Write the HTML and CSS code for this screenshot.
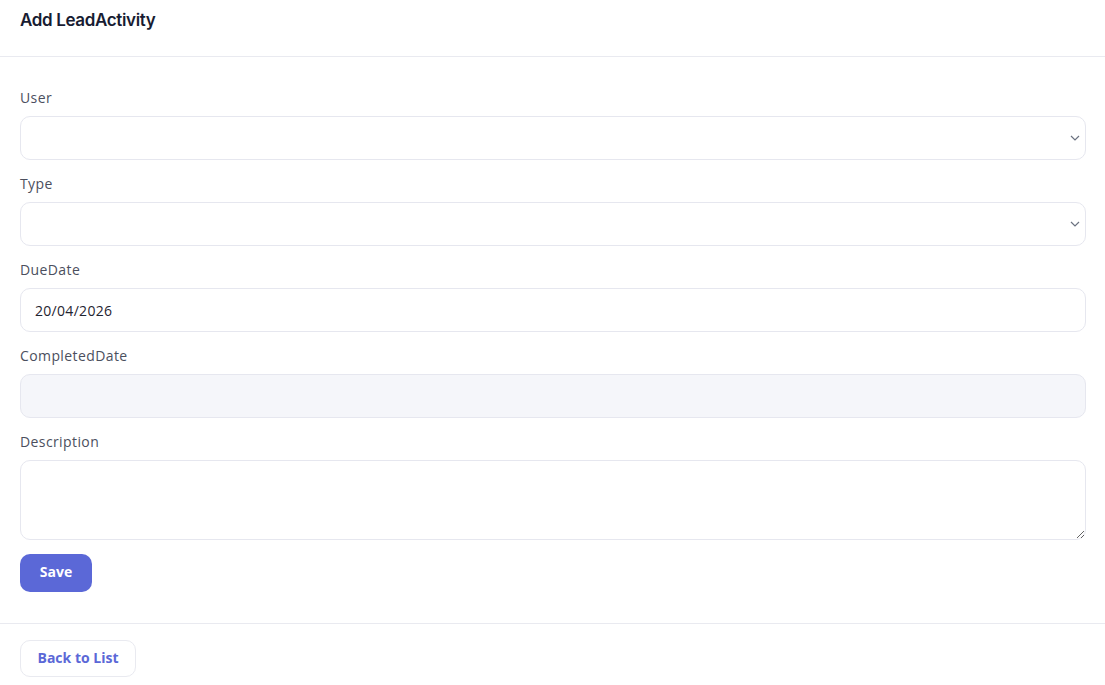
FILE: index.html
```html
<!DOCTYPE html>
<html lang="en">
<head>
<meta charset="utf-8">
<title>Add LeadActivity</title>
<link rel="stylesheet" href="styles.css">
</head>
<body>
<div class="card">
  <div class="card-header">
    <h1 class="title">Add LeadActivity</h1>
  </div>
  <form class="card-body">
    <div class="field">
      <label class="label">User</label>
      <div class="select-wrap">
        <select class="control select"><option></option></select>
        <svg class="chev" width="10" height="6" viewBox="0 0 10 6"><path d="M1 1l4 4 4-4" fill="none" stroke="#6b7280" stroke-width="1.2"/></svg>
      </div>
    </div>
    <div class="field">
      <label class="label">Type</label>
      <div class="select-wrap">
        <select class="control select"><option></option></select>
        <svg class="chev" width="10" height="6" viewBox="0 0 10 6"><path d="M1 1l4 4 4-4" fill="none" stroke="#6b7280" stroke-width="1.2"/></svg>
      </div>
    </div>
    <div class="field">
      <label class="label">DueDate</label>
      <input class="control" type="text" value="20/04/2026">
    </div>
    <div class="field">
      <label class="label">CompletedDate</label>
      <input class="control disabled" type="text" disabled>
    </div>
    <div class="field">
      <label class="label">Description</label>
      <textarea class="control textarea"></textarea>
    </div>
    <button type="button" class="btn btn-primary">Save</button>
  </form>
  <div class="card-footer">
    <a class="btn btn-light">Back to List</a>
  </div>
</div>
</body>
</html>
```

FILE: styles.css
```css
* { box-sizing: border-box; }
html, body { margin: 0; padding: 0; background: #ffffff; }
body { font-family: "Open Sans", "Noto Sans", sans-serif; color: #3f4254; }
.card { width: 1105px; }
.card-header {
  height: 57px;
  border-bottom: 1px solid #e9eaf0;
  padding: 10px 20px 0;
}
.title {
  margin: 0;
  font-family: Inter, sans-serif;
  font-size: 17px;
  font-weight: 600;
  color: #181c32;
  line-height: 21px;
  letter-spacing: -0.35px;
}
.card-body {
  padding: 31px 19px 31px 20px;
  border-bottom: 1px solid #e9eaf0;
  display: flex;
  flex-direction: column;
  align-items: flex-start;
}
.field { width: 100%; margin-bottom: 14px; display: flex; flex-direction: column; }
.label {
  font-size: 14px;
  line-height: 20px;
  margin-bottom: 8px;
  color: #4b4f5e;
  letter-spacing: 0.4px;
}
.control {
  width: 100%;
  height: 44px;
  border: 1px solid #e6e7ef;
  border-radius: 10px;
  background: #ffffff;
  padding: 0 14px;
  font-family: inherit;
  font-size: 14px;
  color: #1f2430;
  letter-spacing: 0.3px;
  outline: none;
}
.select-wrap { position: relative; width: 100%; }
.select { appearance: none; -webkit-appearance: none; display: block; }
.chev { position: absolute; right: 6px; top: 19px; pointer-events: none; }
.disabled { background: #f5f6fa; }
.textarea { height: 80px; display: block; resize: vertical; padding: 10px 14px; }
.btn {
  display: inline-flex;
  align-items: center;
  justify-content: center;
  border-radius: 10px;
  font-family: inherit;
  font-size: 14px;
  font-weight: 700;
  letter-spacing: 0;
  padding: 0 0 3px;
  cursor: pointer;
}
.btn-primary {
  width: 72px;
  height: 38px;
  background: #5b68d7;
  color: #ffffff;
  border: none;
}
.card-footer { padding: 16px 20px; }
.btn-light {
  width: 116px;
  height: 37px;
  background: #ffffff;
  border: 1px solid #e9eaf0;
  color: #5b68d7;
}
```
